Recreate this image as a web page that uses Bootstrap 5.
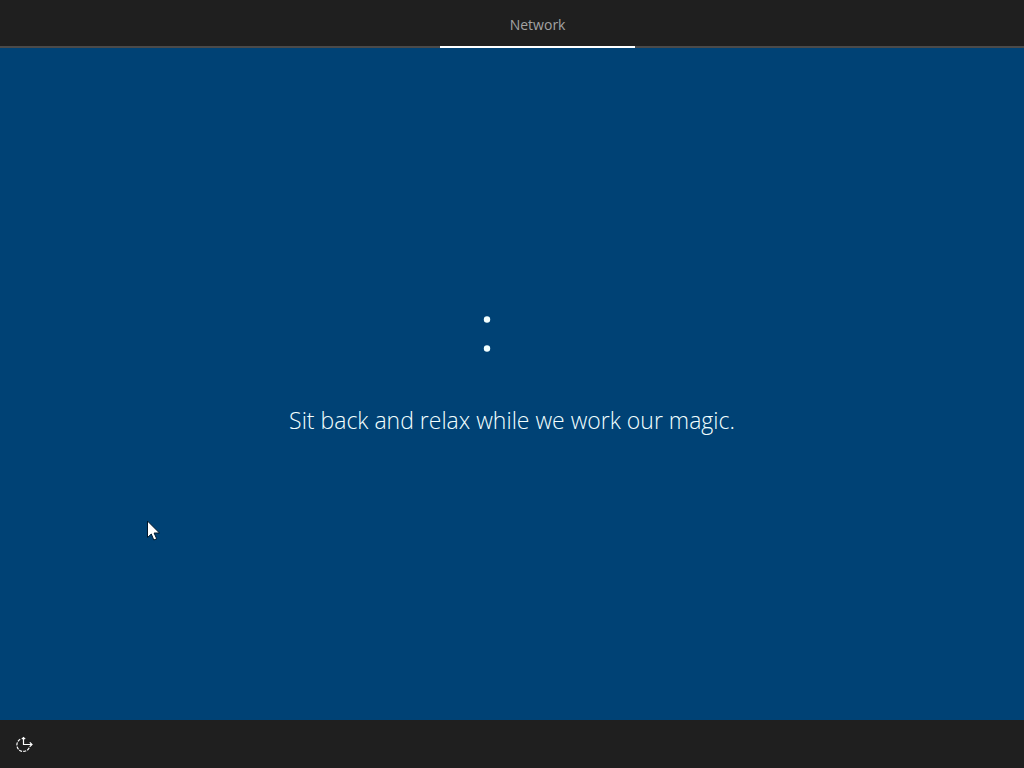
<!DOCTYPE html>
<html lang="en">
<head>
<meta charset="utf-8">
<meta name="viewport" content="width=device-width, initial-scale=1">
<title>Network</title>
<link rel="stylesheet" href="https://cdn.jsdelivr.net/npm/bootstrap@5.3.0/dist/css/bootstrap.min.css">
<style>
  body { background: #004275; color: #fff; font-family: "Open Sans", "Noto Sans", sans-serif; }
  .bar { background: #1f1f1f; height: 48px; }
  .stages { box-shadow: inset 0 -2px #4a4a4a; display: grid; grid-template-columns: 43fr 19fr 38fr; }
  .stage { grid-column: 2; color: #a3a3a3; font-size: 14px; border-bottom: 2px solid #fff; padding-top: 2px; }
  .progress-panel { gap: 38px; padding-bottom: 30px; }
  .message { font-size: 23px; line-height: 32px; font-weight: 300; color: #f2ffff; }
  .pointer { position: absolute; left: 147px; top: 520px; }
</style>
</head>
<body class="d-flex flex-column min-vh-100">
  <header class="bar stages">
    <div class="stage d-flex align-items-center justify-content-center">Network</div>
  </header>

  <main class="progress-panel flex-grow-1 d-flex flex-column align-items-center justify-content-center text-center">
    <svg width="64" height="64" viewBox="0 0 64 64" fill="#f2ffff" role="img" aria-label="Loading">
      <circle cx="7" cy="17.500" r="3.200"/>
      <circle cx="7" cy="46.500" r="3.200"/>
    </svg>
    <h1 class="message m-0">Sit back and relax while we work our magic.</h1>
  </main>

  <footer class="bar d-flex align-items-center">
    <button type="button" class="btn border-0 p-0 ms-3 d-flex text-white" aria-label="Ease of Access">
      <svg width="18" height="18" viewBox="0 0 18 18" fill="none" stroke="currentColor" stroke-width="1.200">
        <path d="M7.500 2.500v7H16M13.800 7.300L16 9.500l-2.200 2.200M5.800 4.200l1.700-1.700 1.700 1.700"/>
        <path d="M4.200 4.300A6.500 6.500 0 1 0 13.700 11.500" stroke-dasharray="3 1.200"/>
      </svg>
    </button>
  </footer>

  <svg class="pointer" width="14" height="21" viewBox="0 0 14 21" aria-hidden="true">
    <path d="M.5 1v16.500l3.800-3.500 2.500 6 2.900-1.200-2.600-5.800H12.500z" fill="#fff" stroke="#00172b" stroke-width="1"/>
  </svg>
  <script src="https://cdn.jsdelivr.net/npm/bootstrap@5.3.0/dist/js/bootstrap.bundle.min.js"></script>
</body>
</html>
